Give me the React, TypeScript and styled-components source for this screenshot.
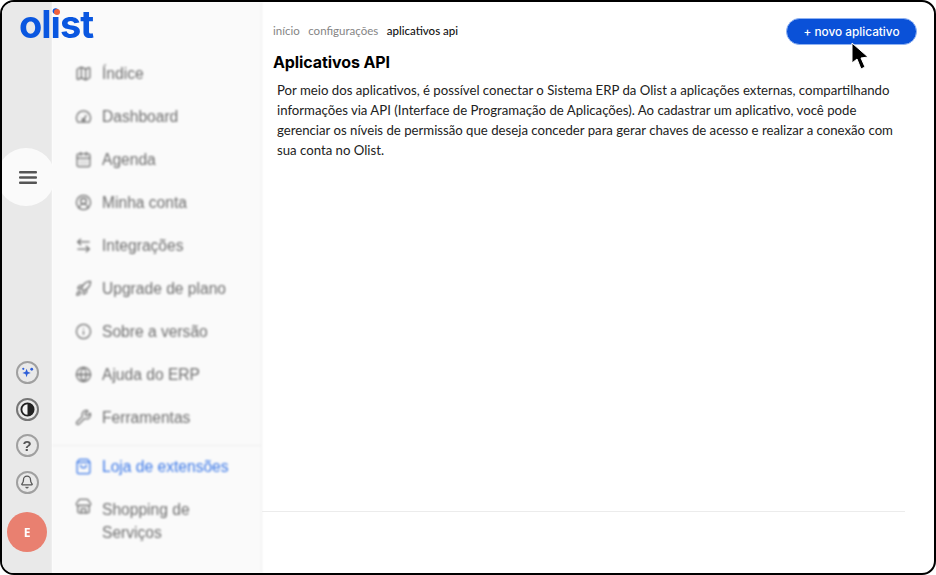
import styled, { createGlobalStyle } from 'styled-components'
import {
  ArrowLeftRight,
  Bell,
  CalendarDays,
  CircleUserRound,
  Globe,
  Info,
  Map as MapIcon,
  Rocket,
  ShoppingBag,
  Store,
  Wrench,
} from 'lucide-react'

const GlobalStyle = createGlobalStyle`
  html, body {
    margin: 0;
    padding: 0;
    background: #fff;
  }
  * {
    box-sizing: border-box;
  }
`

const Frame = styled.div`
  position: relative;
  width: 936px;
  height: 575px;
  border: 2px solid #000;
  border-radius: 14px;
  overflow: hidden;
  display: flex;
  background: #fff;
`

const Rail = styled.aside`
  width: 50px;
  flex-shrink: 0;
  background: #e9e9e9;
  display: flex;
  flex-direction: column;
  align-items: center;
  justify-content: flex-end;
  padding: 0 0 21px 0;
  filter: blur(0.7px);
`

const RailButton = styled.div<{ $dark?: boolean }>`
  width: 23px;
  height: 23px;
  border-radius: 50%;
  border: 2px solid ${(p) => (p.$dark ? '#777' : '#a0a0a0')};
  display: flex;
  align-items: center;
  justify-content: center;
  color: #555;
  margin-bottom: 13.5px;
  font: 700 15px/1 'Liberation Sans', sans-serif;
`

const Avatar = styled.div`
  width: 40px;
  height: 40px;
  margin-top: 5px;
  border-radius: 50%;
  background: #e98070;
  color: #fff;
  font: 700 12px 'Open Sans', sans-serif;
  display: flex;
  align-items: center;
  justify-content: center;
`

const Menubar = styled.nav`
  width: 210px;
  flex-shrink: 0;
  background: #fafafa;
  border-right: 1px solid #ececec;
  padding-top: 50px;
  filter: blur(0.9px);
`

const NavRow = styled.div<{ $active?: boolean; $tall?: boolean }>`
  height: ${(p) => (p.$tall ? '58px' : '43px')};
  display: flex;
  align-items: ${(p) => (p.$tall ? 'flex-start' : 'center')};
  gap: 10px;
  padding-left: 23px;
  color: ${(p) => (p.$active ? '#3b78e7' : '#6e6e6e')};
  font: 400 15.6px/23px 'Liberation Sans', sans-serif;
  padding-top: ${(p) => (p.$tall ? '10px' : '0')};
  margin-top: ${(p) => (p.$active ? '-1px' : '0')};
`

const NavDivider = styled.hr`
  border: 0;
  border-top: 1px solid #efefef;
  margin: 6px 0 0;
`

const Main = styled.main`
  flex: 1;
  min-width: 0;
  padding: 22px 0 0 11px;
  display: flex;
  flex-direction: column;
`

const Crumbs = styled.div`
  display: flex;
  gap: 8.5px;
  font: 400 11.5px/14px 'Lato', sans-serif;
  color: #858585;
`

const CrumbCurrent = styled.span`
  color: #111;
  font-weight: 500;
`

const Title = styled.h1`
  margin: 13px 0 0;
  font: 700 16px/22px 'Inter', sans-serif;
  letter-spacing: -0.1px;
  color: #000;
`

const Description = styled.p`
  margin: 7px 0 0 4px;
  width: 630px;
  font: 400 13.2px/20px 'Lato', sans-serif;
  color: #222;
`

const Footer = styled.div`
  margin-top: auto;
  margin-bottom: 61px;
  margin-right: 29px;
  margin-left: -11px;
  border-top: 1px solid #ececec;
`

const NewButton = styled.button`
  position: absolute;
  top: 16px;
  right: 17px;
  width: 131px;
  height: 27px;
  border-radius: 14px;
  border: 1.5px solid #8fb2f2;
  background: #0a51d8;
  color: #fff;
  font: 500 11.8px 'Inter', sans-serif;
  cursor: pointer;
`

const Pointer = styled.svg`
  position: absolute;
  top: 40px;
  left: 848px;
`

const Logo = styled.div`
  position: absolute;
  top: 2px;
  left: 17px;
  font: 700 38px/40px 'Inter', sans-serif;
  letter-spacing: -1px;
  color: #0a57e0;
  filter: blur(0.4px);
`

const LogoDot = styled.span`
  position: absolute;
  top: 5px;
  left: 34.5px;
  width: 6px;
  height: 6px;
  border-radius: 50%;
  background: #f0603a;
`

const MenuToggle = styled.div`
  position: absolute;
  top: 146px;
  left: -5px;
  width: 58px;
  height: 58px;
  border-radius: 50%;
  background: #fafafa;
  display: flex;
  align-items: center;
  justify-content: center;
  padding-left: 4px;
  filter: blur(0.4px);
`

const GaugeIcon = () => (
  <svg width="17" height="17" viewBox="0 0 24 24" fill="none" stroke="currentColor" strokeWidth="1.8">
    <path d="M4 20a10 10 0 1 1 16 0Z" />
    <path d="M12 17l4-7M7 13h.5M12 8v.5" />
    <circle cx="12" cy="17" r="2" />
  </svg>
)

const SparkDots = () => (
  <svg width="15" height="15" viewBox="0 0 16 16" fill="#2f5fd8">
    <path d="M7 4l1.2 3.3L11.5 8.5 8.2 9.7 7 13 5.8 9.7 2.5 8.5l3.3-1.2Z" />
    <circle cx="12.5" cy="4.5" r="1.5" />
    <circle cx="3.5" cy="4" r="1.2" />
  </svg>
)

const HalfCircle = () => (
  <svg width="15" height="15" viewBox="0 0 16 16">
    <circle cx="8" cy="8" r="6.5" fill="#f4f4f4" stroke="#222" strokeWidth="2" />
    <path d="M8 1.5a6.5 6.5 0 0 1 0 13Z" fill="#222" />
  </svg>
)

const BurgerIcon = () => (
  <svg width="18" height="13" viewBox="0 0 18 13" fill="#555">
    <rect width="18" height="2.6" rx="1" />
    <rect y="5.2" width="18" height="2.6" rx="1" />
    <rect y="10.4" width="18" height="2.6" rx="1" />
  </svg>
)

const iconProps = { size: 17, strokeWidth: 1.8 }

const menuItems = [
  { label: 'Índice', icon: <MapIcon {...iconProps} /> },
  { label: 'Dashboard', icon: <GaugeIcon /> },
  { label: 'Agenda', icon: <CalendarDays {...iconProps} /> },
  { label: 'Minha conta', icon: <CircleUserRound {...iconProps} /> },
  { label: 'Integrações', icon: <ArrowLeftRight {...iconProps} /> },
  { label: 'Upgrade de plano', icon: <Rocket {...iconProps} /> },
  { label: 'Sobre a versão', icon: <Info {...iconProps} /> },
  { label: 'Ajuda do ERP', icon: <Globe {...iconProps} /> },
  { label: 'Ferramentas', icon: <Wrench {...iconProps} /> },
]

export default function App() {
  return (
    <>
      <GlobalStyle />
      <Frame>
        <Rail>
          <RailButton>
            <SparkDots />
          </RailButton>
          <RailButton $dark>
            <HalfCircle />
          </RailButton>
          <RailButton>?</RailButton>
          <RailButton>
            <Bell size={14} strokeWidth={2.2} />
          </RailButton>
          <Avatar>E</Avatar>
        </Rail>
        <Menubar>
          {menuItems.map(({ label, icon }) => (
            <NavRow key={label}>
              {icon}
              {label}
            </NavRow>
          ))}
          <NavDivider />
          <NavRow $active>
            <ShoppingBag {...iconProps} />
            Loja de extensões
          </NavRow>
          <NavRow $tall>
            <Store {...iconProps} />
            <span>
              Shopping de
              <br />
              Serviços
            </span>
          </NavRow>
        </Menubar>
        <Main>
          <Crumbs>
            <span>início</span>
            <span>configurações</span>
            <CrumbCurrent>aplicativos api</CrumbCurrent>
          </Crumbs>
          <Title>Aplicativos API</Title>
          <Description>
            Por meio dos aplicativos, é possível conectar o Sistema ERP da Olist a aplicações externas, compartilhando
            informações via API (Interface de Programação de Aplicações). Ao cadastrar um aplicativo, você pode
            gerenciar os níveis de permissão que deseja conceder para gerar chaves de acesso e realizar a conexão com
            sua conta no Olist.
          </Description>
          <Footer />
        </Main>
        <NewButton>+ novo aplicativo</NewButton>
        <Pointer width="20" height="30" viewBox="0 0 20 30">
          <path d="M2 1 L2 21 L7 17 L11 27 L15 25 L11 16 L18 15 Z" fill="#000" stroke="#fff" strokeWidth="1" />
        </Pointer>
        <Logo>
          olist
          <LogoDot />
        </Logo>
        <MenuToggle>
          <BurgerIcon />
        </MenuToggle>
      </Frame>
    </>
  )
}
